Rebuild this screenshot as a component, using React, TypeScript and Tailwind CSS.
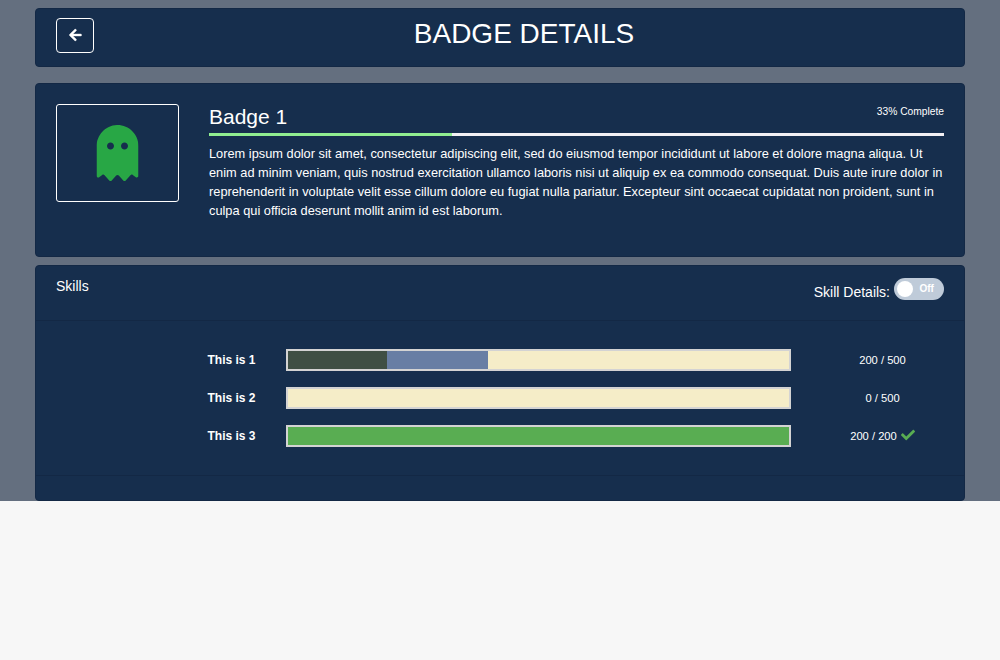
import { FaArrowLeft, FaCheck, FaGhost } from "react-icons/fa";

type Segment = { width: number; color: string };
type Skill = { name: string; progress: string; segments: Segment[]; done?: boolean };

const skills: Skill[] = [
  {
    name: "This is 1",
    progress: "200 / 500",
    segments: [
      { width: 99, color: "bg-[#3f4f44]" },
      { width: 101, color: "bg-[#687ea4]" },
    ],
  },
  { name: "This is 2", progress: "0 / 500", segments: [] },
  { name: "This is 3", progress: "200 / 200", segments: [{ width: 501, color: "bg-[#59ad52]" }], done: true },
];

const card = "rounded-[4px] border border-[#132845] bg-[#162e4d]";

function SkillRow({ skill }: { skill: Skill }) {
  return (
    <div className="flex h-[22px] items-center">
      <div className="w-[250px] pr-[30.5px] text-right text-[12px] font-bold">{skill.name}</div>
      <div className="flex h-[22px] w-[505px] border-2 border-[#d3d3d3] bg-[#f5edc8]">
        {skill.segments.map((s, i) => (
          <div key={i} className={s.color} style={{ width: s.width }} />
        ))}
      </div>
      <div className="flex flex-1 items-center justify-center pl-[10px] text-[11.2px]">
        {skill.progress}
        {skill.done && <FaCheck className="mb-[3px] ml-1 size-[14px] text-[#59ad52]" />}
      </div>
    </div>
  );
}

export default function App() {
  return (
    <div className="min-h-[660px] bg-[#f7f7f7] font-['Liberation_Sans',sans-serif] text-[14px] leading-[21px] text-white">
      <main className="flex h-[501px] flex-col bg-[#646f7f] px-[35px] pt-2">
        <header className={`${card} flex h-[59px] px-5 pt-[9px]`}>
          <button className="flex h-[35px] w-[38px] items-center justify-center rounded-[4px] border border-white pb-[2px]" aria-label="Back">
            <FaArrowLeft className="size-[14px] translate-x-[0.4px] stroke-current stroke-[12]" />
          </button>
          <h1 className="flex-1 pl-[10px] text-center text-[28px] leading-[32px]">BADGE DETAILS</h1>
        </header>

        <section className={`${card} mt-4 flex h-[174px] px-5 pt-5`}>
          <div className="flex h-[98px] w-[123px] items-center justify-center rounded-[3px] border border-white pr-px">
            <FaGhost className="h-[56px] w-[42px] translate-x-[0.5px] text-[#28a745]" />
          </div>
          <div className="ml-[30px] w-[735px]">
            <div className="flex h-[29px] justify-between">
              <h2 className="text-[21px] leading-[25px]">Badge 1</h2>
              <span className="text-[10.24px] leading-[15px]">33% Complete</span>
            </div>
            <div className="h-[3px] bg-[#f2f0f4]">
              <div className="h-full w-[33%] bg-[#90ee90]" />
            </div>
            <p className="mt-2 text-[12.8px] leading-[19px]">
              Lorem ipsum dolor sit amet, consectetur adipiscing elit, sed do eiusmod tempor incididunt ut labore et dolore magna aliqua. Ut enim ad minim veniam, quis nostrud exercitation ullamco laboris nisi ut aliquip ex ea commodo consequat. Duis aute irure dolor in reprehenderit in voluptate velit esse cillum dolore eu fugiat nulla pariatur. Excepteur sint occaecat cupidatat non proident, sunt in culpa qui officia deserunt mollit anim id est laborum.
            </p>
          </div>
        </section>

        <section className={`${card} mt-2 h-[236px]`}>
          <div className="flex h-[55px] justify-between border-b border-[#132845] px-5">
            <h3 className="pt-[10px]">Skills</h3>
            <div className="flex items-start gap-1">
              <span className="pt-4">Skill Details:</span>
              <div className="mt-3 flex h-[22px] w-[50px] items-center rounded-full bg-[#bfcbd9] pl-[3px]">
                <div className="size-4 rounded-full bg-white" />
                <span className="ml-[6.5px] text-[10px] font-semibold leading-[20px]">Off</span>
              </div>
            </div>
          </div>
          <div className="flex h-[155px] flex-col gap-4 border-b border-[#132845] pt-[28px]">
            {skills.map((s) => (
              <SkillRow key={s.name} skill={s} />
            ))}
          </div>
        </section>
      </main>
    </div>
  );
}
